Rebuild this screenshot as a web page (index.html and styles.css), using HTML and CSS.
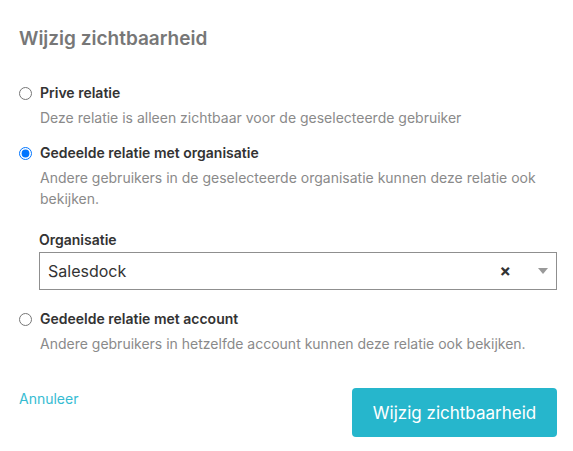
FILE: index.html
```html
<!DOCTYPE html>
<html lang="nl">
<head>
  <meta charset="UTF-8">
  <title>Wijzig zichtbaarheid</title>
  <link rel="stylesheet" href="styles.css">
</head>
<body>
  <div class="modal">
    <h2 class="title">Wijzig zichtbaarheid</h2>

    <div class="option">
      <label class="option-label"><input type="radio" name="visibility"> Prive relatie</label>
      <p class="option-desc">Deze relatie is alleen zichtbaar voor de geselecteerde gebruiker</p>
    </div>

    <div class="option">
      <label class="option-label"><input type="radio" name="visibility" checked> Gedeelde relatie met organisatie</label>
      <p class="option-desc">Andere gebruikers in de geselecteerde organisatie kunnen deze relatie ook bekijken.</p>

      <div class="field">
        <div class="field-label">Organisatie</div>
        <div class="select">
          <span class="select-value">Salesdock</span>
          <span class="select-clear">&times;</span>
          <span class="select-arrow"></span>
        </div>
      </div>
    </div>

    <div class="option">
      <label class="option-label"><input type="radio" name="visibility"> Gedeelde relatie met account</label>
      <p class="option-desc">Andere gebruikers in hetzelfde account kunnen deze relatie ook bekijken.</p>
    </div>

    <div class="actions">
      <a href="#" class="cancel">Annuleer</a>
      <button class="submit">Wijzig zichtbaarheid</button>
    </div>
  </div>
</body>
</html>
```

FILE: styles.css
```css
body {
  margin: 0;
  font-family: Inter, "Noto Sans", sans-serif;
  background: #fff;
  color: #333;
}
.modal {
  padding: 25px 16px 14px 19px;
}
.title {
  margin: 0 0 30px;
  font-size: 19px;
  font-weight: 600;
  color: #777;
  line-height: 28px;
}
.option {
  margin-bottom: 15px;
}
.option-label {
  display: flex;
  align-items: center;
  gap: 8px;
  font-size: 14px;
  font-weight: 600;
  color: #333;
  line-height: 20px;
}
.option-label input {
  margin: 0;
  width: 13px;
  height: 13px;
}
.option-desc {
  margin: 4px 0 0 21px;
  font-size: 14px;
  line-height: 21px;
  color: #8a8a8a;
}
.field {
  margin: 21px 0 0 20px;
  padding-bottom: 4px;
}
.field-label {
  font-size: 14px;
  font-weight: 600;
  color: #333;
  line-height: 20px;
  margin-bottom: 2px;
}
.select {
  display: flex;
  align-items: center;
  height: 38px;
  box-sizing: border-box;
  border: 1px solid #8f8f8f;
  padding: 0 8px 0 8px;
}
.select-value {
  flex: 1;
  font-size: 16px;
  color: #333;
}
.select-clear {
  font-size: 17px;
  font-weight: 700;
  color: #333;
  margin-right: 27px;
}
.select-arrow {
  width: 0;
  height: 0;
  border-left: 5px solid transparent;
  border-right: 5px solid transparent;
  border-top: 6px solid #999;
}
.actions {
  display: flex;
  justify-content: space-between;
  align-items: flex-start;
  margin-top: 34px;
}
.cancel {
  color: #36bcd2;
  text-decoration: none;
  font-size: 14px;
  margin-top: 2px;
}
.submit {
  width: 205px;
  height: 49px;
  border: 0;
  border-radius: 4px;
  background: #26b6cc;
  color: #fff;
  font-family: inherit;
  font-size: 17px;
  cursor: pointer;
}
```
